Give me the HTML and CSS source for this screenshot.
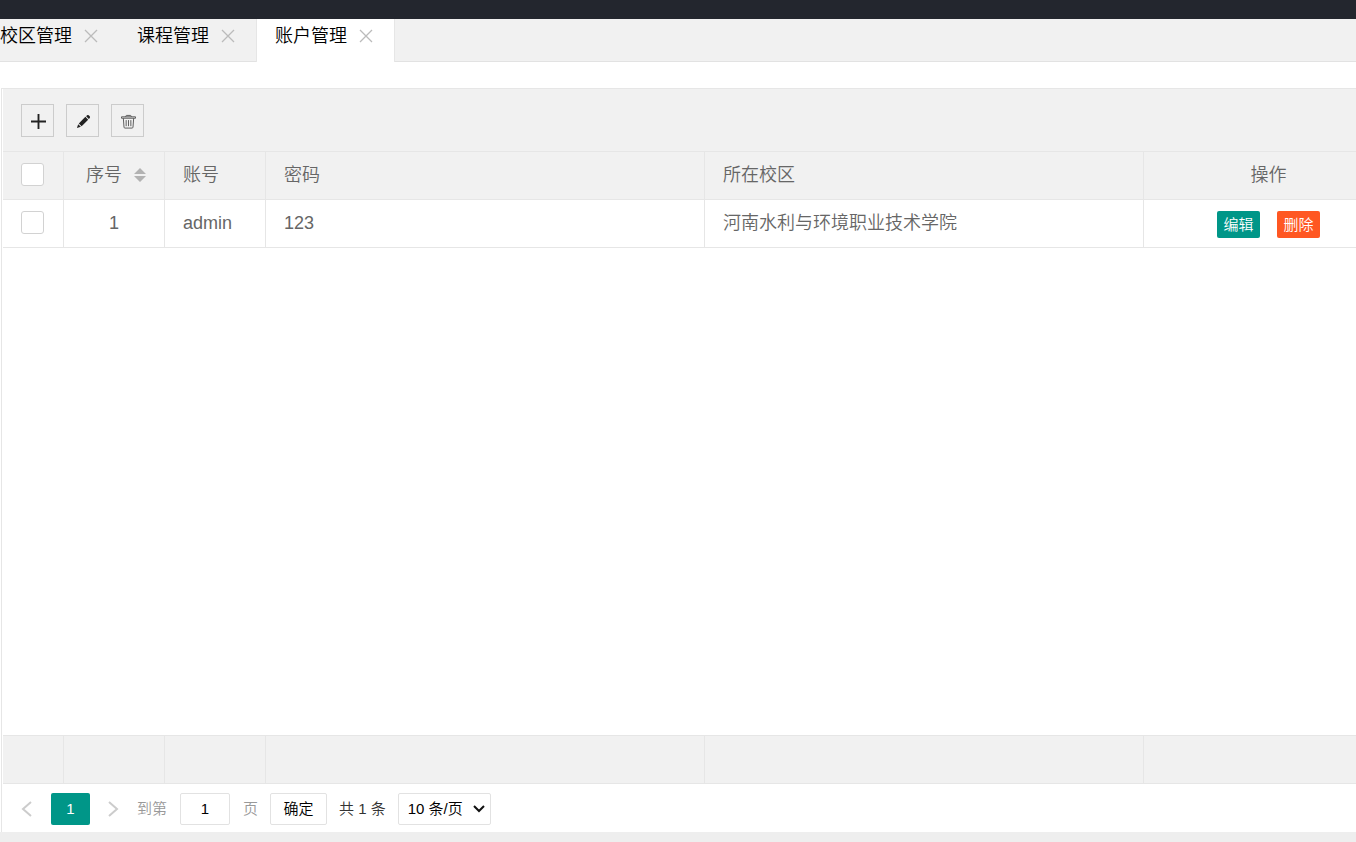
FILE: index.html
```html
<!DOCTYPE html>
<html lang="zh-CN">
<head>
<meta charset="utf-8">
<title>账户管理</title>
<link rel="stylesheet" href="styles.css">
</head>
<body>
<header class="topbar"></header>
<nav class="tabs">
  <div class="tab tab-first"><a href="#campus">校区管理</a><button class="tab-close" aria-label="关闭校区管理"><svg viewBox="0 0 14 14"><path d="M1 1l12 12M13 1L1 13"/></svg></button></div>
  <div class="tab"><a href="#course">课程管理</a><button class="tab-close" aria-label="关闭课程管理"><svg viewBox="0 0 14 14"><path d="M1 1l12 12M13 1L1 13"/></svg></button></div>
  <div class="tab tab-active"><a href="#account">账户管理</a><button class="tab-close" aria-label="关闭账户管理"><svg viewBox="0 0 14 14"><path d="M1 1l12 12M13 1L1 13"/></svg></button></div>
</nav>
<main class="panel">
  <div class="frame">
    <div class="toolbar">
      <button class="tool" aria-label="添加"><svg viewBox="0 0 16 16"><path d="M8 0v16M0 8h16" stroke="#222" stroke-width="2"/></svg></button>
      <button class="tool" aria-label="编辑"><svg viewBox="0 0 16 16"><path fill="#222" d="M1 15l1.300-4.200 2.900 2.900zM3 10l7-7 3 3-7 7zM10.800 2.300l1-1q.9-.7 1.800.1l1 1q.8.900.1 1.800l-1 1z"/></svg></button>
      <button class="tool" aria-label="删除"><svg viewBox="0 0 16 16" fill="none" stroke="#555"><path d="M.5 4.500V3h15v1.500zM5 3q0-1.500 1-1.500h4q1 0 1 1.500M2.500 4.500l.7 9.500q.1 1 1 1h7.600q.9 0 1-1l.7-9.500M5.500 6.500V13M8 6.500V13M10.500 6.500V13"/></svg></button>
    </div>
    <div class="table-body">
      <table class="grid">
        <colgroup><col class="c-check"><col class="c-num"><col class="c-num"><col><col><col class="c-ops"></colgroup>
        <thead>
          <tr>
            <th><input type="checkbox" class="check" aria-label="全选"></th>
            <th><button class="sortable">序号<svg class="sort" viewBox="0 0 12 14"><path d="M6 0l6 6H0zM0 8h12l-6 6z"/></svg></button></th>
            <th>账号</th><th>密码</th><th>所在校区</th><th class="center">操作</th>
          </tr>
        </thead>
        <tbody>
          <tr>
            <td><input type="checkbox" class="check" aria-label="选择第1行"></td>
            <td class="center">1</td><td>admin</td><td>123</td><td>河南水利与环境职业技术学院</td>
            <td><div class="ops"><button class="op op-edit">编辑</button><button class="op op-delete">删除</button></div></td>
          </tr>
        </tbody>
      </table>
    </div>
    <table class="grid totals">
      <colgroup><col class="c-check"><col class="c-num"><col class="c-num"><col><col><col class="c-ops"></colgroup>
      <tbody><tr><td></td><td></td><td></td><td></td><td></td><td></td></tr></tbody>
    </table>
    <div class="pager">
      <button class="arrow" aria-label="上一页"><svg viewBox="0 0 12 16"><path d="M10 1L2 8l8 7"/></svg></button>
      <button class="current">1</button>
      <button class="arrow" aria-label="下一页"><svg viewBox="0 0 12 16"><path d="M2 1l8 7-8 7"/></svg></button>
      <label class="jump">到第<input type="text" value="1">页</label>
      <button class="confirm">确定</button>
      <span class="count">共 1 条</span>
      <select class="limit" aria-label="每页条数"><option>10 条/页</option></select>
    </div>
  </div>
</main>
</body>
</html>
```
FILE: styles.css
```css
* { box-sizing: border-box; }
body {
  margin: 0;
  height: 100vh;
  display: flex;
  flex-direction: column;
  overflow: hidden;
  padding-bottom: 10px;
  background: #eee;
  color: #666;
  font: 350 18px/24px "Liberation Sans", "Noto Sans CJK SC DemiLight", "Noto Sans CJK SC", sans-serif;
}
button, input, select { font: inherit; color: inherit; margin: 0; padding: 0; }
button { border: 0; background: none; cursor: pointer; }
svg { display: block; }

.topbar { height: 19px; flex: none; background: #23262e; }
.tabs {
  display: flex;
  flex: none;
  height: 43px;
  background: #f1f1f1;
  border-bottom: 1px solid #e2e2e2;
}
.tab {
  display: flex;
  align-items: center;
  gap: 12px;
  height: 43px;
  padding: 0 21px 9px 18px;
}
.tab a { color: #000; text-decoration: none; }
.tab-first { padding-left: 0; }
.tab-active { background: #fff; border: solid #e6e6e6; border-width: 0 1px; }
.tab-close { width: 14px; height: 14px; }
.tab-close svg { width: 14px; height: 14px; fill: none; stroke: #bbb; stroke-width: 1.3; }

.panel {
  flex: 1;
  min-height: 0;
  display: flex;
  padding: 26px 0 0 1px;
  background: #fff;
}
.frame {
  flex: 1;
  min-width: 0;
  display: flex;
  flex-direction: column;
  overflow: hidden;
  padding-left: 1px;
  border: solid #e6e6e6;
  border-width: 1px 0 0 1px;
}
.toolbar {
  display: flex;
  gap: 12px;
  flex: none;
  padding: 15px 18px 14px;
  background: #f1f1f1;
}
.tool {
  display: flex;
  align-items: center;
  justify-content: center;
  width: 33px;
  height: 33px;
  padding: 2px 0 0 2px;
  border: 1px solid #ccc;
}
.tool svg { width: 15px; height: 15px; }

.table-body { flex: 1; min-height: 0; overflow: hidden; }
.grid {
  width: calc(100% + 38px);
  table-layout: fixed;
  border-collapse: separate;
  border-spacing: 0;
}
.c-check { width: 61px; }
.c-num { width: 101px; }
.c-ops { width: 250px; }
.grid th, .grid td {
  height: 48px;
  padding: 0 18px 2px;
  text-align: left;
  font-weight: inherit;
  border-right: 1px solid #e6e6e6;
  border-bottom: 1px solid #e6e6e6;
}
.grid th { height: 49px; border-top: 1px solid #e6e6e6; background: #f1f1f1; }
.grid .center { text-align: center; }
.totals { flex: none; }
.totals td { height: 49px; border-top: 1px solid #e6e6e6; background: #f1f1f1; }
.check {
  display: block;
  appearance: none;
  width: 23px;
  height: 23px;
  border: 1px solid #d2d2d2;
  border-radius: 3px;
  background: #fff;
}
.sortable { display: flex; align-items: center; gap: 12px; margin-left: 4px; }
.sort { width: 12px; height: 14px; fill: #b2b2b2; }
.ops { display: flex; justify-content: center; gap: 17px; padding-top: 4px; }
.op {
  width: 43px;
  height: 27px;
  border-radius: 2px;
  color: #fff;
  font-size: 15px;
  font-weight: 400;
  line-height: 27px;
}
.op-edit { background: #009688; }
.op-delete { background: #ff5722; }

.pager {
  display: flex;
  align-items: center;
  flex: none;
  gap: 12px;
  height: 48px;
  padding: 1px 18px 0;
  font-size: 15px;
}
.arrow { width: 18px; height: 32px; }
.arrow svg { width: 12px; height: 16px; fill: none; stroke: #ccc; stroke-width: 2; }
.arrow:nth-child(3) { padding-left: 5px; margin-right: 5px; }
.current { width: 39px; height: 32px; border-radius: 2px; background: #009688; color: #fff; }
.jump { display: flex; align-items: center; gap: 13px; color: #999; }
.jump input, .confirm, .limit {
  height: 32px;
  border: 1px solid #e2e2e2;
  border-radius: 2px;
  background: #fff;
  color: #000;
}
.jump input { width: 50px; text-align: center; }
.confirm { width: 57px; }
.count { color: #333; }
.limit {
  appearance: none;
  width: 93px;
  padding-left: 9px;
  background: #fff url("data:image/svg+xml,%3Csvg xmlns='http://www.w3.org/2000/svg' width='12' height='8'%3E%3Cpath d='M1 1l5 5 5-5' fill='none' stroke='%23111' stroke-width='2'/%3E%3C/svg%3E") no-repeat right 5px center;
}
```
